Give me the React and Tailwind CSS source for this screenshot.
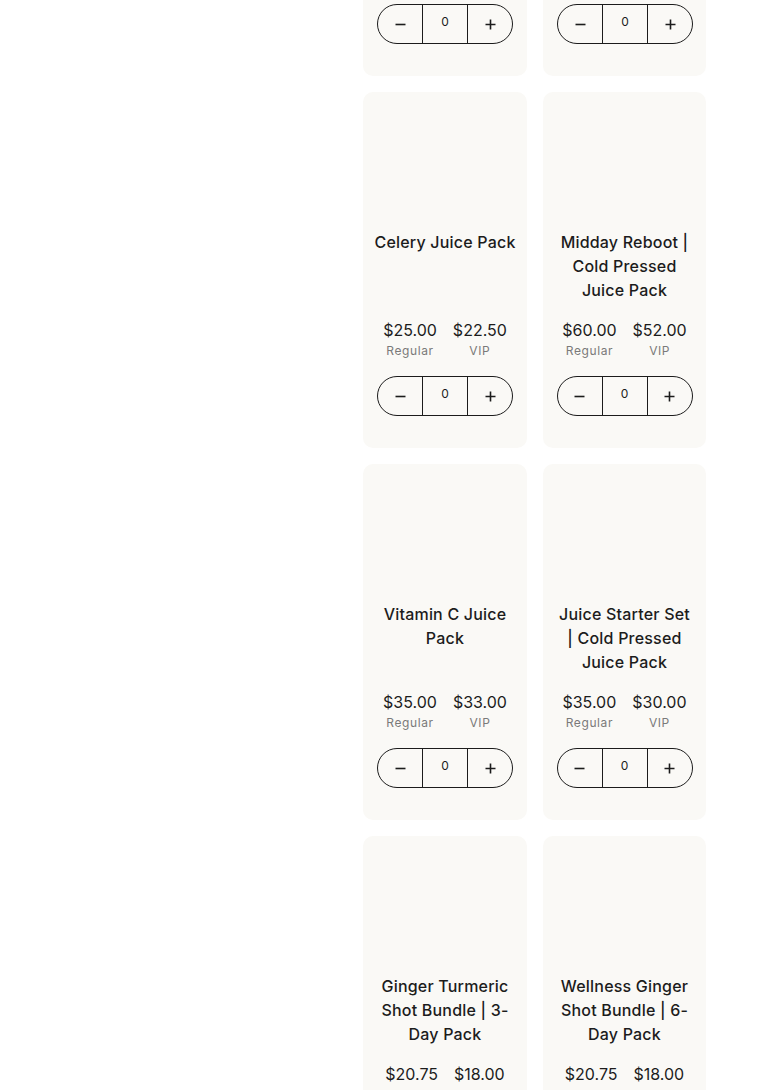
import React from "react";

const products = [
  { lines: ["Celery Juice Pack"], reg: "$25.00", vip: "$22.50" },
  { lines: ["Midday Reboot |", "Cold Pressed", "Juice Pack"], reg: "$60.00", vip: "$52.00" },
  { lines: ["Vitamin C Juice", "Pack"], reg: "$35.00", vip: "$33.00" },
  { lines: ["Juice Starter Set", "| Cold Pressed", "Juice Pack"], reg: "$35.00", vip: "$30.00" },
  { lines: ["Ginger Turmeric", "Shot Bundle | 3-", "Day Pack"], reg: "$20.75", vip: "$18.00" },
  { lines: ["Wellness Ginger", "Shot Bundle | 6-", "Day Pack"], reg: "$20.75", vip: "$18.00" },
];

function Minus() {
  return (
    <svg width="11" height="11" viewBox="0 0 11 11" fill="none">
      <path d="M0.5 5.5H10.5" stroke="#1c1c1c" strokeWidth="1.6" />
    </svg>
  );
}

function Plus() {
  return (
    <svg width="11" height="11" viewBox="0 0 11 11" fill="none">
      <path d="M0.5 5.5H10.5M5.5 0.5V10.5" stroke="#1c1c1c" strokeWidth="1.6" />
    </svg>
  );
}

function Stepper() {
  return (
    <div className="mx-auto flex h-[40px] w-[136px] items-stretch rounded-full border border-[#1c1c1c]">
      <button className="flex w-[44px] items-center justify-center">
        <Minus />
      </button>
      <div className="flex w-[46px] items-start justify-center border-x border-[#1c1c1c] pt-[10px] text-[12px] leading-[14px] text-[#1c1c1c]">
        0
      </div>
      <button className="flex flex-1 items-center justify-center">
        <Plus />
      </button>
    </div>
  );
}

function TopCard() {
  return (
    <div className="h-[76px] rounded-b-[10px] bg-[#faf9f6] px-[14px] pt-[4px]">
      <Stepper />
    </div>
  );
}

function Card({ p }) {
  return (
    <div className="flex h-[356px] flex-col rounded-[10px] bg-[#faf9f6] px-[10px] pt-[138px] pb-[32px]">
      <div className="h-[72px] text-center text-[16px] font-medium leading-[24px] tracking-[0.2px] text-[#1c1c1c]">
        {p.lines.map((l, i) => (
          <div key={i} className="whitespace-nowrap">
            {l}
          </div>
        ))}
      </div>
      <div className="mt-[18px] flex justify-center gap-[16px]">
        <div className="flex flex-col items-center">
          <span className="text-[16px] leading-[20px] text-[#1c1c1c]">{p.reg}</span>
          <span className="mt-[3px] text-[12px] leading-[16px] tracking-[0.6px] text-[#7a7a7a]">Regular</span>
        </div>
        <div className="flex flex-col items-center">
          <span className="text-[16px] leading-[20px] text-[#1c1c1c]">{p.vip}</span>
          <span className="mt-[3px] text-[12px] leading-[16px] tracking-[0.6px] text-[#7a7a7a]">VIP</span>
        </div>
      </div>
      <div className="mt-[17px]">
        <Stepper />
      </div>
    </div>
  );
}

export default function App() {
  return (
    <div
      className="h-[1090px] overflow-hidden bg-white"
      style={{ fontFamily: "Inter, 'Noto Sans', sans-serif" }}
    >
      <div className="flex">
        <div className="w-[363px] shrink-0" />
        <div className="grid grid-cols-[164px_163px] gap-x-[16px] gap-y-[16px]">
          <TopCard />
          <TopCard />
          {products.map((p, i) => (
            <Card key={i} p={p} />
          ))}
        </div>
      </div>
    </div>
  );
}
